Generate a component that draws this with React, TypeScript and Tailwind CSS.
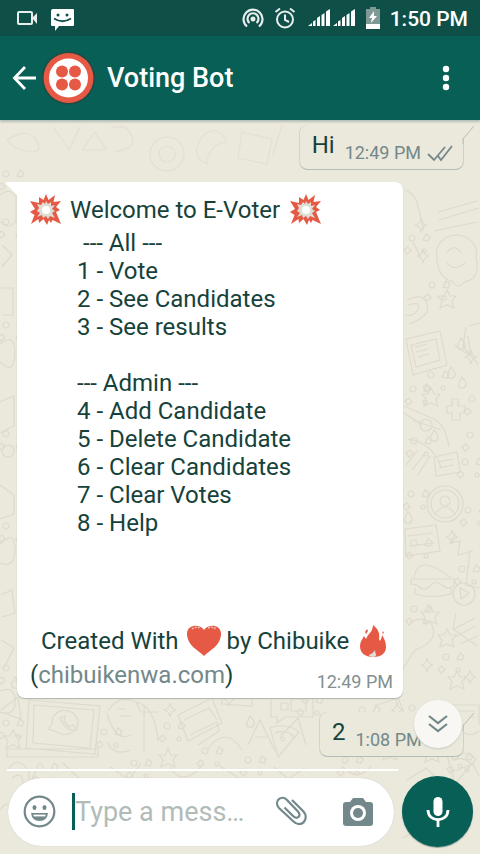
import type { ReactNode } from "react";

const menu = [
  "1 - Vote",
  "2 - See Candidates",
  "3 - See results",
  "",
  "--- Admin ---",
  "4 - Add Candidate",
  "5 - Delete Candidate",
  "6 - Clear Candidates",
  "7 - Clear Votes",
  "8 - Help",
];

function StatusBar() {
  return (
    <div className="flex h-9 items-center bg-[#0e5048] pl-4 pr-3 text-white">
      <svg width="22" height="16" viewBox="0 0 22 16" fill="none" stroke="#e8eeec" strokeWidth="2">
        <rect x="2" y="2" width="14" height="12" rx="1" />
        <path d="M16 8 21 3V14Z" fill="#e8eeec" stroke="none" />
      </svg>
      <svg className="ml-3 mt-1" width="25" height="23" viewBox="0 0 25 23">
        <path d="M3 0H23Q24 0 24 1V16Q24 17 23 17H9L5 22V17H2Q1 17 1 16V2Q1 0 3 0Z" fill="#fff" />
        <circle cx="8" cy="6" r="1.500" fill="#0e5048" />
        <circle cx="17" cy="6" r="1.500" fill="#0e5048" />
        <path d="M4 9.500Q12.500 15 21 9.500" fill="none" stroke="#0e5048" strokeWidth="1.800" />
      </svg>
      <div className="flex-1" />
      <svg width="22" height="20" viewBox="0 0 22 20" fill="none" stroke="#e8eeec" strokeWidth="2.200">
        <circle cx="11" cy="11" r="2.500" fill="#e8eeec" stroke="none" />
        <path d="M7.500 15A5.500 5.500 0 1 1 14.500 15" />
        <path d="M5 18.500A9.500 9.500 0 1 1 17 18.500" />
      </svg>
      <svg className="ml-2.5" width="22" height="22" viewBox="0 0 22 22" fill="none" stroke="#e8eeec" strokeWidth="2">
        <circle cx="11" cy="12.500" r="8" />
        <path d="M11 7.500V13L15 15M1.500 5 6 1.500M20.500 5 16 1.500" />
      </svg>
      <svg className="ml-3" width="48" height="18" viewBox="0 0 48 18" fill="#fff">
        <path d="M0 17 4 14V17ZM5 17V12.500L7.500 11V17ZM9 17V9L12 7V17ZM13.500 17V6L16.500 4V17ZM18 17V2.500L22 0V17ZM25 17 29 14V17ZM30 17V12.500L32.500 11V17ZM34 17V9L37 7V17ZM38.500 17V6L41.500 4V17ZM43 17V2.500L47 0V17Z" />
      </svg>
      <svg className="ml-2.5" width="14" height="22" viewBox="0 0 14 22">
        <path d="M4 0H10V2H14V22H0V2H4Z" fill="#7f9a95" />
        <path d="M8 4 3 11H6L5 16 11 9H8Z" fill="#fff" />
        <path d="M0 17H14V22H0Z" fill="#fff" />
      </svg>
      <span className="mt-0.5 ml-2.5 text-[21px] leading-8 font-medium whitespace-nowrap">1:50 PM</span>
    </div>
  );
}

function Header() {
  return (
    <header className="relative z-10 flex h-[84px] items-center bg-[#075f55] pl-3 pr-5 text-white shadow-[0_2px_2px_#b5bfb9]">
      <button aria-label="Back" className="h-12 w-7">
        <svg width="25" height="24" viewBox="0 0 25 24" fill="none" stroke="#fff" strokeWidth="2.800">
          <path d="M24 12H3M13 1 2.500 12 13 23" />
        </svg>
      </button>
      <svg className="ml-0.5" width="53" height="54" viewBox="0 0 53 54">
        <circle cx="26.500" cy="27" r="26.500" fill="#234a42" />
        <circle cx="26.500" cy="27" r="25" fill="#e65a45" />
        <circle cx="26.500" cy="27" r="19.500" fill="#fff" />
        <g fill="#e65a45">
          <circle cx="20" cy="20.500" r="6" />
          <circle cx="33" cy="20.500" r="6" />
          <circle cx="20" cy="33.500" r="6" />
          <circle cx="33" cy="33.500" r="6" />
        </g>
      </svg>
      <h1 className="ml-3 flex-1 text-[27px] leading-9 font-medium whitespace-nowrap">Voting Bot</h1>
      <button aria-label="More options" className="flex h-12 w-7 items-center justify-center">
        <svg width="8" height="26" viewBox="0 0 8 26" fill="#fff">
          <circle cx="4" cy="4" r="3.200" />
          <circle cx="4" cy="13" r="3.200" />
          <circle cx="4" cy="22" r="3.200" />
        </svg>
      </button>
    </header>
  );
}

function Doodles() {
  return (
    <svg
      aria-hidden="true"
      className="absolute inset-0 h-full w-full"
      viewBox="0 0 480 734"
      preserveAspectRatio="xMidYMid slice"
      fill="none"
      stroke="#dedacd"
      strokeWidth="1.200"
    >
      <defs>
        <path id="star" d="m0-9 3 6 6 0-4 5 2 7-7-3-7 3 2-7-4-5h6z" />
        <path id="spark" d="M0-7Q1-1 6 0Q1 1 0 7Q-1 1-6 0Q-1-1 0-7Z" />
        <path id="drop" d="M0-6Q7 1 2 5Q-5 6-3 0Z" />
        <path id="pizza" d="M-15-11Q2-17 14-7L-7 18ZM-10-6Q2-10 9-2M-4 0a2 2 0 1 0 4 0a2 2 0 1 0-4 0" />
        <g id="bits">
          <circle cx="0" cy="0" r="3" />
          <path d="m14-4 4 3-2 4-5-1zM-8 12l4-3 3 4-4 3zM10 13a2 2 0 1 0 4 0a2 2 0 1 0-4 0" />
        </g>
      </defs>
      <path d="M7 20Q30 5 38 23Q42 35 26 31Q14 29 7 20M54 8l15 22 11-23M95 12l12 18h-25zM112 8q15-5 20 8t-18 16M150 34a17 17 0 1 0 34 0a17 17 0 1 0-34 0M159 34a8 8 0 1 0 16 0a8 8 0 1 0-16 0M202 17q15-15 25 5q-19 2-20 22q-18-8-5-27M242 12l30 7-5 25-29-6zM282 5l-9 30" opacity="0.6" />
      <path d="M0 75q10-8 16 2v24q-8 10-16 0M2 125l10 10-10 12M0 168h13v27H2M0 224q16-12 15 10T0 242M0 282l14-6v30l-14 7M2 331a6 6 0 1 0 12 0a6 6 0 1 0-12 0M0 365l14 10v19l-14 5M0 424q15-15 15 5T0 443M1 475l11-5 3 23-13 4M1 520l13 8-10 20M0 571q15-6 15 10T0 592" />
      <path d="M406 70q10 5 12 16l6 25M438 92l39-11M439 100l40-12M434 111l43-9M413 122l8 16M437 137a20 18 0 1 1 39 0Q481 160 464 162q-5 8-11 0-16-5-16-25M447 132q8-9 14 1M447 143q7 9 18 0" />
      <path d="M407 180q16-8 20 4t-18 20M408 185q14-4 10 4t-12 6M406 219l34-8 7 34-34 10zM411 225l25-6 4 21-24 7zM415 227l12-3M416 232l12-3M418 237l11-3M469 206l11-3M466 207l-3 19 15 18M454 225l17 11-3-20" />
      <path d="M404 286l32 14q10 7 13 27M404 293l18 12M420 305a6 6 0 1 0 12 0a6 6 0 1 0-12 0M452 279h6v7h7v7h-5v7h-8v-7h-5v-7h5zM408 319q25 4 33 28M413 300l28 10" />
      <path d="M406 345l12-15M412 350l14-18M417 356l13-20M434 337l23-5 3 20-24 4zM438 342l15-3M439 348l14-3" />
      <circle cx="445" cy="384" r="18" />
      <circle cx="445" cy="384" r="14" />
      <circle cx="445" cy="381" r="5" />
      <path d="M435 394q10-14 20 0M405 409l31-4 4 26-34 5zM408 416l25-3M409 426l25-3M456 413l-6 10 10-2-2 14 15-4M470 430l-4 35 14 3M414 458q4-26 37 0M411 459h43v6q-6 6-12 0t-12 1-13-1l-6-1zM415 468v6q16 5 36 0v-6" />
      <path d="M410 502q19-8 23 6t-18 22l-8 12-4 7M456 493l-3 16 24 17M454 509l21-11M455 517l21-11M460 524l18-8M452 585h27v20M457 591h18M457 597h18" />
      <circle cx="464" cy="474" r="11" />
      <path d="m460 468 9 5-8 6z" />
      <path d="M1 590l17-13 3 22-20-7M29 580l71 6-5 48-69-6zM34 585l60 5-4 38-57-5zM7 629h91v8H7zM48 609l4-5a13 12 0 1 1 5 8zM60 598q6 14 17 12l-4-5-4 2-5-6 1-5z" />
      <path d="M108 591q10-17 28-9l5 10h17M107 593q8 30 24 22M136 582q19 4 22 39M144 586v45M107 622q7 15 24 8M117 589h9M120 596h11" />
      <path d="M140 579q5-16 17 0M178 595l34-17 10 25-34 18zM184 600l25-12 8 12M190 615l27-13 2 9-21 14M207 630q18-26 35 0M220 569q2-8 10 0t10 1 12 0v16l-30-2zM275 571h38v26h-28l-8 6v-6h-6v-23zM281 583h7v7h-7zM291 579h15v12h-15z" />
      <path d="M248 625l12-25 15 31M255 617h12M280 617l18-19 8 27M337 577q9-23 18 1M375 576q19-15 22 8M374 586l24-8 8 20M462 594a12 12 0 1 0 17 17M8 650q9-16 21 1v17M12 658q11-8 11 7M407 660l19-12 16 15M449 653l24-9 6 12M0 690q8-12 15 0v24M403 718l15-9 11 14M36 650l-8 19M63 643l19 18M110 647l19 13 12-17M170 647q12 20 31 0M220 646l20 13M274 647l14 12 17-11M342 646q15 17 29 0" />
      <use href="#pizza" x="427" y="29" />
      <use href="#pizza" x="462" y="646" />
      <use href="#pizza" x="285" y="619" />
      {[[421, 105], [423, 136], [471, 237], [452, 417], [470, 557], [170, 590], [229, 579], [427, 545], [397, 590]].map(([x, y], i) => (
        <use key={i} href="#spark" x={x} y={y} />
      ))}
      {[[431, 277], [447, 179], [430, 495], [447, 518], [457, 560], [13, 619], [168, 638], [390, 631], [432, 633]].map(([x, y], i) => (
        <use key={i} href="#star" x={x} y={y} />
      ))}
      {[[461, 224], [451, 253], [462, 263], [434, 316], [408, 398], [149, 573], [15, 563], [250, 602]].map(([x, y], i) => (
        <use key={i} href="#drop" x={x} y={y} />
      ))}
      {[[412, 118], [432, 165], [431, 255], [413, 269], [472, 279], [470, 315], [414, 321], [465, 342], [411, 374], [468, 390], [414, 423], [462, 449], [414, 489], [446, 537], [6, 603], [104, 612], [167, 606], [205, 631], [305, 580], [341, 603], [362, 590], [412, 588], [455, 637], [6, 54], [6, 102], [6, 205], [6, 314], [6, 406], [6, 548], [40, 647], [134, 643], [248, 640], [345, 640]].map(([x, y], i) => (
        <use key={i} href="#bits" x={x} y={y} />
      ))}
    </svg>
  );
}

function Burst() {
  return (
    <svg width="32" height="32" viewBox="0 0 32 32">
      <path
        d="M16 0 18.500 6 25 1 23.500 8 31 7 26 13 30 16 26 18 31 30 22.500 26 21 29 19 26 17 31 13.500 25 9 29 8.500 25 1 30 4.500 21 0 18 5 15 0 7 9 9 9 3 13.500 6Z"
        fill="#e65a45"
      />
      <path
        d="M16 7 18 10 21 8 21 12 25 11 22 15 25 17 22 19 25 24 20 22 18 25 16 22 13 24 12 21 7 23 10 19 7 17 9 14 7 10 11 11 13 8 15 10Z"
        fill="#dfddd4"
      />
      <circle cx="16" cy="16" r="4" fill="#fff" />
    </svg>
  );
}

function Heart() {
  return (
    <svg width="34" height="32" viewBox="0 0 34 32">
      <path d="M17 31C11 25 1 21 0 10C-1 0 12-2 17 5C22-2 35 0 34 10C33 21 23 25 17 31Z" fill="#e65a45" />
      <path d="M5 4Q9 1 13 3M21 3Q25 1 29 4" stroke="#eac0b7" strokeWidth="1.500" strokeDasharray="2 1" fill="none" />
    </svg>
  );
}

function Flame() {
  return (
    <svg width="28" height="34" viewBox="0 0 28 34">
      <path
        d="M14 1C19 5 21 9 20 15L21 17Q23 14 23 11Q27 17 27 23C27 30 21 33 14 33C6 33 1 29 1 22C1 18 3 16 5 12L7 15Q8 12 10 10Q14 6 14 1Z"
        fill="#e65a45"
      />
      <path d="M8 5 9 7 7 10 6 8ZM24 7 25 9 23 10Z" fill="#e65a45" />
      <path d="M10 32Q10 30 12 30Q14 29 16 26Q16 29 17 30Q18 32 14 33Z" fill="#e5dcd5" />
    </svg>
  );
}

function Outgoing({ children, time, className }: { children: ReactNode; time: ReactNode; className: string }) {
  return (
    <div className={`relative mr-[17px] flex h-[45px] self-end rounded-lg rounded-tr-none border-b border-[#b4bcb7] bg-[#ebe8dc] pt-0.5 pl-3 shadow-[-1px_0_0_#d5d4ca,1px_0_0_#d0d1c8] ${className}`}>
      <svg className="absolute top-0 -right-3" width="13" height="19" viewBox="0 0 13 19">
        <path d="M0 0H12L1 13V19H0Z" fill="#ebe8dc" />
        <path d="M12 1 1 14V19" fill="none" stroke="#b8bfba" />
      </svg>
      <span className="text-2xl leading-9">{children}</span>
      <span className="mt-3.5 ml-2.5 flex h-6 items-center text-lg leading-6 whitespace-nowrap text-[#73888a]">{time}</span>
    </div>
  );
}

function Incoming() {
  return (
    <article className="relative mt-3 ml-[17px] w-[386px] max-w-[90%] rounded-lg rounded-tl-none bg-white pt-2 pr-2.5 pb-2 pl-[13px] text-2xl leading-7 whitespace-nowrap shadow-[0_1px_1px_#aeb6b1]">
      <svg className="absolute top-0 -left-3" width="13" height="14" viewBox="0 0 13 14">
        <path d="M1 0H13V14L1 2Q0 0 1 0Z" fill="#fff" />
      </svg>
      <p className="flex h-[39px] items-center">
        <Burst />
        <span className="mr-2.5 ml-2">Welcome to E-Voter</span>
        <Burst />
      </p>
      <p className="pl-[53px]">--- All ---</p>
      <div className="pl-[47px]">
        {menu.map((line, i) => (
          <p key={i} className="h-7">{line}</p>
        ))}
      </div>
      <p className="mt-[84px] flex h-10 items-center pl-[11px]">
        <span className="mr-2">Created With</span>
        <Heart />
        <span className="mr-2.5 ml-1.5">by Chibuike</span>
        <Flame />
      </p>
      <div className="flex items-end justify-between">
        <p className="pb-px">
          (<a href="#site" className="text-[#73888a]">chibuikenwa.com</a>)
        </p>
        <time className="-mb-1 text-lg leading-6 text-[#83908f]">12:49 PM</time>
      </div>
    </article>
  );
}

function Composer() {
  return (
    <footer className="relative mt-auto flex items-center gap-2 pr-[7px] pb-[7px] pl-2">
      <div className="flex h-[68px] min-w-0 flex-1 items-center rounded-full bg-white pr-5 pl-[15px] text-[#73888a] shadow-[0_0_1px_#b5bfb9]">
        <button aria-label="Emoji" className="shrink-0">
          <svg width="33" height="33" viewBox="0 0 33 33" fill="none" stroke="currentColor" strokeWidth="2.200">
            <circle cx="16.500" cy="16.500" r="14.800" />
            <ellipse cx="11.500" cy="12.500" rx="2" ry="2.500" fill="currentColor" stroke="none" />
            <ellipse cx="21.500" cy="12.500" rx="2" ry="2.500" fill="currentColor" stroke="none" />
            <path d="M8 18H25Q24 26 16.500 26Q9 26 8 18Z" fill="currentColor" stroke="none" />
            <path d="M10.500 20.500H22.500" stroke="#fff" strokeWidth="1.800" />
          </svg>
        </button>
        <span className="ml-4 h-[37px] w-[3px] shrink-0 bg-[#075f55]" />
        <input
          aria-label="Message"
          placeholder="Type a mess…"
          className="h-10 w-0 min-w-0 flex-1 bg-transparent pt-0.5 text-[27px] text-[#16423b] outline-none placeholder:text-[#b1bcb7]"
        />
        <button aria-label="Attach file" className="shrink-0">
          <svg width="33" height="31" viewBox="0 0 33 31" fill="none" stroke="currentColor" strokeWidth="2.200">
            <path d="M17 4 28.500 15.500C35 23 26 33 18.500 25.500L4 12C-2 5 7-2 12 4L23 15.500C27 20 22 24 18 20L9.500 11.500" />
          </svg>
        </button>
        <button aria-label="Camera" className="ml-[34px] shrink-0">
          <svg width="32" height="30" viewBox="0 0 32 30">
            <path d="M11 1H21L24 5H28Q31 5 31 8V26Q31 29 28 29H4Q1 29 1 26V8Q1 5 4 5H8Z" fill="currentColor" />
            <circle cx="16" cy="16" r="8" fill="#fff" />
            <circle cx="16" cy="16" r="5" fill="currentColor" />
          </svg>
        </button>
      </div>
      <button aria-label="Record voice message" className="flex h-[71px] w-[71px] shrink-0 items-center justify-center rounded-full bg-[#075f55] shadow-[0_1px_1px_#8da49d]">
        <svg width="24" height="32" viewBox="0 0 24 32" fill="none" stroke="#fff" strokeWidth="2.800">
          <rect x="7.500" y="1" width="9" height="19" rx="4.500" fill="#fff" stroke="none" />
          <path d="M2 14C2 27 22 27 22 14M12 23V31" />
        </svg>
      </button>
    </footer>
  );
}

export default function App() {
  return (
    <div className="flex min-h-screen flex-col bg-[#ebe8dc] font-[Roboto,sans-serif] text-[#16423b]">
      <StatusBar />
      <Header />
      <main className="relative flex flex-1 flex-col overflow-hidden">
        <Doodles />
        <div className="relative flex flex-col pt-[5px]">
          <Outgoing
            className="pr-2.5"
            time={
              <>
                12:49 PM
                <svg className="ml-1.5" width="26" height="18" viewBox="0 0 26 18" fill="none" stroke="currentColor" strokeWidth="1.800">
                  <path d="M1 10 7 16 18 3M11 12 14 16 25 2" />
                </svg>
              </>
            }
          >
            Hi
          </Outgoing>
          <Incoming />
          <div className="relative mt-3.5 flex flex-col">
            <Outgoing className="w-[143px]" time="1:08 PM">
              2
            </Outgoing>
            <button aria-label="Scroll to latest" className="absolute -top-3 right-[18px] flex h-12 w-12 items-center justify-center rounded-full bg-[#f8f7f3] text-[#73888a] shadow-[0_1px_2px_#c9cbc3]">
              <svg width="20" height="18" viewBox="0 0 20 18" fill="none" stroke="currentColor" strokeWidth="2.200">
                <path d="M1 1 10 8 19 1M1 9 10 16 19 9" />
              </svg>
            </button>
          </div>
          <div className="mt-3 mr-[82px] ml-[7px] h-0.5 bg-white" />
        </div>
        <Composer />
      </main>
    </div>
  );
}
